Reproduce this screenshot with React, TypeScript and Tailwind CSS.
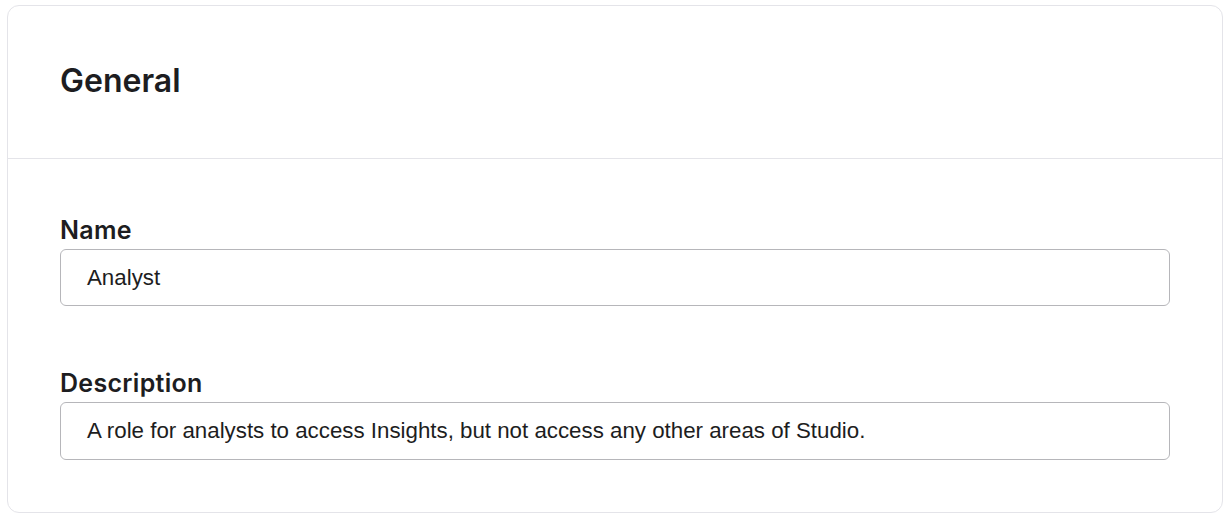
export default function App() {
  return (
    <div className="w-[1232px] h-[520px] bg-white" style={{ fontFamily: "Inter, 'Noto Sans', sans-serif" }}>
      <div className="ml-[7px] mt-[5px] w-[1216px] h-[508px] border border-[#e4e4e9] rounded-[12px] overflow-hidden flex flex-col">
        <div className="h-[153px] border-b border-[#e4e4e9] flex items-center pl-[52px] pb-[2px]">
          <h1 className="text-[32px] font-semibold text-[#1d1d21] tracking-[0px]">General</h1>
        </div>
        <div className="flex flex-col px-[52px] pt-[56px]">
          <label className="text-[25px] leading-[30px] font-semibold text-[#1d1d21] tracking-[0.3px]">Name</label>
          <div className="mt-[4px] h-[57px] border border-[#b6b6ba] rounded-[6px] flex items-center pl-[26px] text-[22.3px] text-[#1d1d21]" style={{ fontFamily: "'Liberation Sans', Arial, sans-serif" }}>
            Analyst
          </div>
          <label className="mt-[62px] text-[25px] leading-[30px] font-semibold text-[#1d1d21] tracking-[0.3px]">Description</label>
          <div className="mt-[4px] h-[58px] border border-[#b6b6ba] rounded-[6px] flex items-center pl-[26px] text-[22.3px] text-[#1d1d21]" style={{ fontFamily: "'Liberation Sans', Arial, sans-serif" }}>
            A role for analysts to access Insights, but not access any other areas of Studio.
          </div>
        </div>
      </div>
    </div>
  );
}
